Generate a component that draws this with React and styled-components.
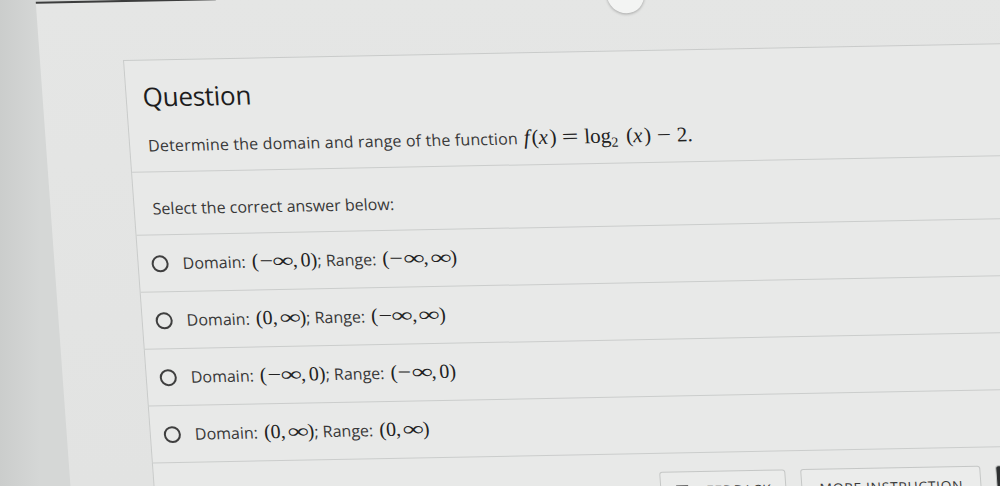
import React from 'react';
import styled, { createGlobalStyle } from 'styled-components';

const GlobalStyle = createGlobalStyle`
  html, body {
    margin: 0;
    padding: 0;
  }
  body {
    width: 1000px;
    height: 486px;
    overflow: hidden;
    background: #d3d5d4;
    font-family: "Open Sans", "Liberation Sans", sans-serif;
    color: #333;
  }
`;

const Viewport = styled.div`
  width: 1000px;
  height: 486px;
  overflow: hidden;
  background: linear-gradient(90deg, #cbcdcc 0%, #d5d7d6 40px);
`;

/* the photographed screen is tilted a little, so the whole page gets one transform */
const Screen = styled.div`
  position: relative;
  box-sizing: border-box;
  width: 1120px;
  height: 640px;
  margin-left: 40px;
  background: linear-gradient(180deg, #e5e6e5 0%, #e1e2e1 100%);
  transform-origin: 83px 60px;
  transform: rotate(-1.1deg) skewX(3deg);
`;

const TopEdge = styled.div`
  width: 180px;
  height: 2px;
  background: #3c3d3d;
`;

const Knob = styled.div`
  position: absolute;
  left: 571px;
  top: -14px;
  width: 37px;
  height: 37px;
  border-radius: 50%;
  background: #f3f4f3;
  box-shadow: 0 1px 3px rgba(0, 0, 0, 0.28);
`;

const Card = styled.div`
  margin: 58px 0 0 83px;
  width: 1000px;
  background: #e8e9e8;
  border: 1px solid #c9cbca;
  border-right: none;
`;

const QuestionBlock = styled.section`
  box-sizing: border-box;
  height: 112px;
  padding: 19px 18px 0 16px;
  border-bottom: 1px solid #cbcdcc;
`;

const Title = styled.h2`
  margin: 0;
  font-size: 26px;
  font-weight: 400;
  line-height: 34px;
  color: #1d1d1d;
  letter-spacing: -0.3px;
`;

const Prompt = styled.p`
  margin: 20px 0 0 2px;
  height: 24px;
  font-size: 16px;
  line-height: 24px;
  letter-spacing: 0.15px;
  color: #383838;
  white-space: nowrap;
`;

const SelectBlock = styled.div`
  box-sizing: border-box;
  height: 63px;
  padding: 24px 18px 0 18px;
  font-size: 16px;
  line-height: 24px;
  color: #383838;
  border-bottom: 1px solid #cbcdcc;
`;

const OptionRow = styled.label`
  box-sizing: border-box;
  height: 57px;
  display: flex;
  align-items: center;
  gap: 14px;
  padding-left: 13px;
  border-bottom: 1px solid #cbcdcc;
  font-size: 16px;
  color: #383838;
  white-space: nowrap;
`;

const Radio = styled.span`
  box-sizing: border-box;
  flex: none;
  width: 17px;
  height: 17px;
  border: 2px solid #3f3f3f;
  border-radius: 50%;
`;

const OptionText = styled.span`
  line-height: 24px;
`;

const MathSpan = styled.span`
  font-family: "Liberation Serif", "DejaVu Serif", serif;
  font-size: ${p => p.$size || 20}px;
  line-height: 20px;
  letter-spacing: 0;
  color: #222;
  white-space: nowrap;
  margin-left: ${p => p.$gap || 2}px;
`;

const Var = styled.i`
  font-style: italic;
  margin-right: ${p => p.$kern || 0}px;
`;

const Op = styled.span`
  display: inline-block;
  transform: scaleX(${p => p.$stretch || 1.3});
  margin: 0 ${p => p.$space || 5}px;
`;

const Minus = styled.span`
  display: inline-block;
  transform: scaleX(1.2);
  margin: 0 2px;
`;

const Inf = styled.span`
  display: inline-block;
  width: 0.95em;
  text-align: center;
  transform: scaleX(1.5);
`;

const Comma = styled.span`
  margin-right: 3px;
`;

const Sub = styled.sub`
  font-size: 14px;
  line-height: 0;
  vertical-align: -4px;
  margin-right: 8px;
`;

const Footer = styled.div`
  display: flex;
  gap: 15px;
  padding: 18px 0 0 505px;
`;

const Button = styled.button`
  box-sizing: border-box;
  height: 38px;
  width: ${p => p.$w}px;
  display: flex;
  align-items: center;
  justify-content: center;
  gap: 9px;
  border: 1px solid #c5c7c6;
  border-radius: 3px;
  background: ${p => (p.$dark ? '#2e3031' : '#ebeceb')};
  font-family: "Open Sans", "Liberation Sans", sans-serif;
  font-size: 14px;
  letter-spacing: 0.6px;
  color: #3a3a3a;
  padding: 0;
`;

const Bound = ({ v }) => {
  if (v === '-inf') return (<><Minus>−</Minus><Inf>∞</Inf></>);
  if (v === 'inf') return <Inf>∞</Inf>;
  return <span>{v}</span>;
};

const Interval = ({ lo, hi }) => (
  <MathSpan>
    (<Bound v={lo} /><Comma>,</Comma><Bound v={hi} />)
  </MathSpan>
);

const options = [
  { d: ['-inf', '0'], r: ['-inf', 'inf'] },
  { d: ['0', 'inf'], r: ['-inf', 'inf'] },
  { d: ['-inf', '0'], r: ['-inf', '0'] },
  { d: ['0', 'inf'], r: ['0', 'inf'] },
];

const FeedbackIcon = () => (
  <svg width="14" height="13" viewBox="0 0 14 13" aria-hidden="true">
    <path d="M1 1h12v8H5l-3 3V9H1z" fill="#3a3a3a" />
  </svg>
);

export default function App() {
  return (
    <Viewport>
      <GlobalStyle />
      <Screen>
        <TopEdge />
        <Knob />
        <Card>
          <QuestionBlock>
            <Title>Question</Title>
            <Prompt>
              Determine the domain and range of the function
              <MathSpan $gap={6} $size={21}>
                <Var $kern={2}>f</Var>(<Var $kern={1.5}>x</Var>)
                <Op $space={8} $stretch={1.4}>=</Op>
                log<Sub>2</Sub>(<Var $kern={1.5}>x</Var>)
                <Op $space={7} $stretch={1.2}>−</Op>2.
              </MathSpan>
            </Prompt>
          </QuestionBlock>
          <SelectBlock>Select the correct answer below:</SelectBlock>
          {options.map((o, i) => (
            <OptionRow key={i}>
              <Radio />
              <OptionText>
                Domain: <Interval lo={o.d[0]} hi={o.d[1]} />; Range: <Interval lo={o.r[0]} hi={o.r[1]} />
              </OptionText>
            </OptionRow>
          ))}
          <Footer>
            <Button $w={126}>
              <FeedbackIcon />
              FEEDBACK
            </Button>
            <Button $w={180}>MORE INSTRUCTION</Button>
            <Button $w={150} $dark aria-label="submit" />
          </Footer>
        </Card>
      </Screen>
    </Viewport>
  );
}
